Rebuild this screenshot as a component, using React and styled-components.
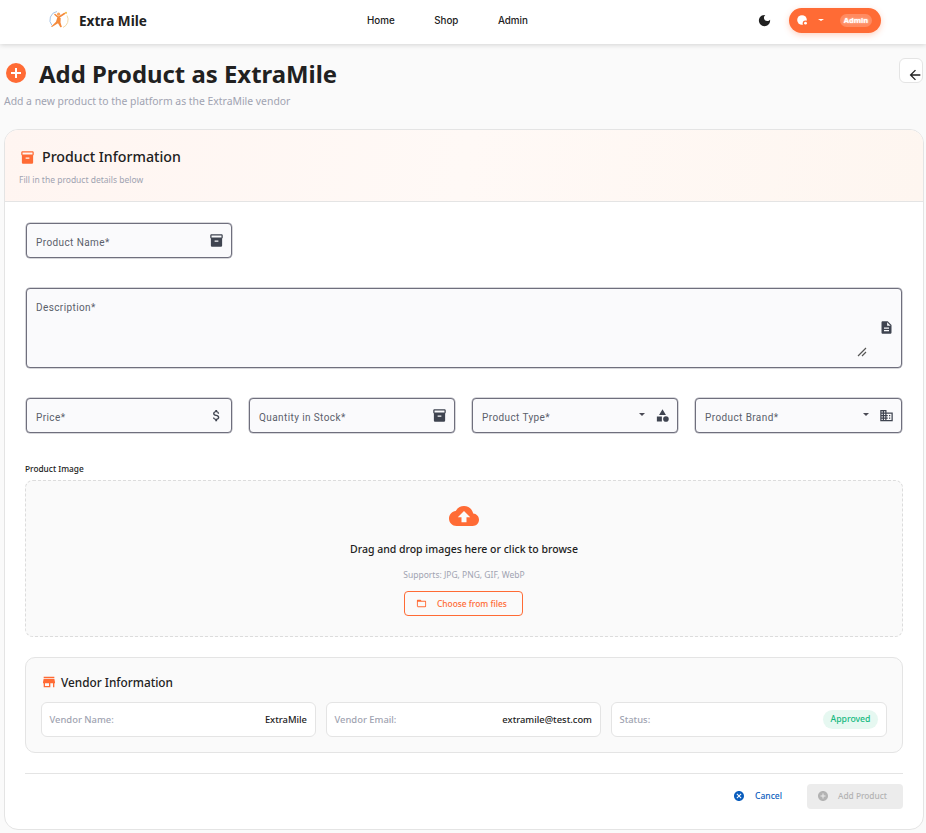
import React from 'react';
import styled, { createGlobalStyle } from 'styled-components';

const GlobalStyle = createGlobalStyle`
  html, body { margin: 0; padding: 0; background: #fafafa; overflow: hidden; }
  body { font-family: "Noto Sans", "Open Sans", sans-serif; color: #212121; }
  * { box-sizing: border-box; }
`;

const ORANGE = '#ff6b35';

// material style icon paths
const paths = {
  box: 'M20 2H4c-1 0-2 .9-2 2v3.01c0 .72.43 1.34 1 1.69V20c0 1.1 1.1 2 2 2h14c.9 0 2-.9 2-2V8.7c.57-.35 1-.97 1-1.69V4c0-1.1-1-2-2-2zm-5 12H9v-2h6v2zm5-7H4V4l16-.02V7z',
  doc: 'M14 2H6c-1.1 0-1.99.9-1.99 2L4 20c0 1.1.89 2 1.99 2H18c1.1 0 2-.9 2-2V8l-6-6zm2 16H8v-2h8v2zm0-4H8v-2h8v2zm-3-5V3.5L18.5 9H13z',
  money: 'M11.8 10.9c-2.27-.59-3-1.2-3-2.15 0-1.09 1.01-1.85 2.7-1.85 1.78 0 2.44.85 2.5 2.1h2.21c-.07-1.72-1.12-3.3-3.21-3.81V3h-3v2.16c-1.94.42-3.5 1.68-3.5 3.61 0 2.31 1.91 3.46 4.7 4.13 2.5.6 3 1.48 3 2.41 0 .69-.49 1.79-2.7 1.79-2.06 0-2.87-.92-2.98-2.1h-2.2c.12 2.19 1.76 3.42 3.68 3.83V21h3v-2.15c1.95-.37 3.5-1.5 3.5-3.55 0-2.84-2.43-3.81-4.7-4.4z',
  category: 'M12 2l-5.5 9h11zM3 13.5h8v8H3zM17.5 13a4.5 4.5 0 1 0 0 9 4.5 4.5 0 0 0 0-9z',
  domain: 'M12 7V3H2v18h20V7H12zM6 19H4v-2h2v2zm0-4H4v-2h2v2zm0-4H4V9h2v2zm0-4H4V5h2v2zm4 12H8v-2h2v2zm0-4H8v-2h2v2zm0-4H8V9h2v2zm0-4H8V5h2v2zm10 12h-8v-2h2v-2h-2v-2h2v-2h-2V9h8v10zm-2-8h-2v2h2v-2zm0 4h-2v2h2v-2z',
  cloud: 'M19.35 10.04C18.67 6.59 15.64 4 12 4 9.11 4 6.6 5.64 5.35 8.04 2.34 8.36 0 10.91 0 14c0 3.31 2.69 6 6 6h13c2.76 0 5-2.24 5-5 0-2.64-2.05-4.78-4.65-4.96zM14 13v4h-4v-4H7l5-5 5 5h-3z',
  folder: 'M20 6h-8l-2-2H4c-1.1 0-1.99.9-1.99 2L2 18c0 1.1.9 2 2 2h16c1.1 0 2-.9 2-2V8c0-1.1-.9-2-2-2zm0 12H4V8h16v10z',
  store: 'M20 4H4v2h16V4zm1 10v-2l-1-5H4l-1 5v2h1v6h10v-6h4v6h2v-6h1zm-9 4H6v-4h6v4z',
  cancel: 'M12 2C6.47 2 2 6.47 2 12s4.47 10 10 10 10-4.47 10-10S17.53 2 12 2zm5 13.59L15.59 17 12 13.41 8.41 17 7 15.59 10.59 12 7 8.41 8.41 7 12 10.59 15.59 7 17 8.41 13.41 12 17 15.59z',
  add: 'M12 2C6.48 2 2 6.48 2 12s4.48 10 10 10 10-4.48 10-10S17.52 2 12 2zm5 11h-4v4h-2v-4H7v-2h4V7h2v4h4v2z',
  moon: 'M12 3c-4.97 0-9 4.03-9 9s4.03 9 9 9 9-4.03 9-9c0-.46-.04-.92-.1-1.36-.98 1.37-2.58 2.26-4.4 2.26-2.98 0-5.4-2.42-5.4-5.4 0-1.81.89-3.42 2.26-4.4-.44-.06-.9-.1-1.36-.1z',
  back: 'M20 11H7.83l5.59-5.59L12 4l-8 8 8 8 1.41-1.41L7.83 13H20v-2z',
};

const Icon = ({ name, size = 16, color = 'currentColor' }) => (
  <svg width={size} height={size} viewBox="0 0 24 24" fill={color} style={{ flex: 'none', display: 'block' }}>
    <path d={paths[name]} />
  </svg>
);

const Navbar = styled.nav`
  height: 44px;
  background: #fff;
  box-shadow: 0 1px 5px rgba(0, 0, 0, 0.16);
  display: flex;
  align-items: center;
  position: relative;
  padding: 0 0 4px 49px;
`;

const Brand = styled.div`
  display: flex;
  align-items: center;
  gap: 10px;
  width: 318px;
  font-size: 13.6px;
  font-weight: 700;
`;

const NavLinks = styled.div`
  display: flex;
  gap: 39.5px;
  width: 390px;
`;

const NavLink = styled.span`
  font-size: 9.8px;
  font-weight: 500;
  font-family: Inter, sans-serif;
`;

const MoonButton = styled.div`
  width: 15px;
  color: #212121;
`;

const UserPill = styled.div`
  width: 92px;
  height: 25px;
  margin-left: 17px;
  border-radius: 13px;
  background: ${ORANGE};
  box-shadow: 0 2px 6px rgba(255, 107, 53, 0.3);
  display: flex;
  align-items: center;
  color: #fff;
  padding-left: 8px;
`;

const Caret = styled.span`
  width: 0;
  height: 0;
  border-left: 3px solid transparent;
  border-right: 3px solid transparent;
  border-top: 2px solid currentColor;
`;

const PillCaret = styled(Caret)`
  margin-left: 10px;
`;

const RoleBadge = styled.span`
  margin-left: 16px;
  height: 13px;
  width: 32px;
  text-align: center;
  border-radius: 7px;
  background: rgba(255, 255, 255, 0.22);
  font-size: 7.5px;
  font-weight: 700;
  line-height: 13px;
  text-shadow: 0 0 2px rgba(255, 255, 255, 0.9);
`;

const Page = styled.main`
  padding: 13px 2px 0 4px;
  height: 789px;
  position: relative;
`;

const TitleRow = styled.div`
  display: flex;
  align-items: center;
  gap: 13px;
  height: 33px;
  padding-left: 2px;
`;

const PlusCircle = styled.span`
  width: 20px;
  height: 20px;
  margin-top: -1px;
  border-radius: 50%;
  background: ${ORANGE};
  position: relative;
  &::before, &::after {
    content: '';
    position: absolute;
    background: #fff;
    left: 5px;
    top: 9px;
    width: 10px;
    height: 2px;
  }
  &::after {
    transform: rotate(90deg);
  }
`;

const Title = styled.h1`
  margin: 0;
  font-size: 23.9px;
  font-weight: 700;
`;

const Subtitle = styled.p`
  margin: 4px 0 0;
  height: 35px;
  font-size: 10.4px;
  line-height: 15px;
  color: #a0a3b1;
`;

const BackButton = styled.div`
  position: absolute;
  top: 14px;
  right: 3px;
  width: 24px;
  height: 25px;
  background: #fff;
  border: 1px solid #e4e4e4;
  border-radius: 6px;
  display: flex;
  align-items: flex-end;
  justify-content: center;
  padding-left: 7px;
  color: #212121;
`;

const BackIcon = styled.span`
  margin-bottom: -1px;
`;

const Card = styled.section`
  height: 701px;
  background: #fff;
  border: 1px solid #e4e4e4;
  border-radius: 14px;
  overflow: hidden;
`;

const CardHeader = styled.header`
  height: 72px;
  padding: 15px 15px 0;
  background: linear-gradient(100deg, #fff5f1, #fff9f6 50%, #fef6f0);
  border-bottom: 1px solid #e4e4e4;
`;

const CardTitle = styled.h2`
  margin: 0;
  display: flex;
  align-items: center;
  gap: 7px;
  font-size: 14.2px;
  font-weight: 500;
  line-height: 24px;
`;

const CardHint = styled.p`
  margin: 5px 0 0 -1px;
  font-size: 8.5px;
  line-height: 12px;
  color: #a0a3b1;
`;

const Form = styled.div`
  padding: 21px 21px 0 21px;
`;

const FieldGrid = styled.div`
  display: grid;
  grid-template-columns: 206px 206px 206px 1fr;
  column-gap: 17px;
  margin-bottom: 30px;
`;

const Field = styled.div`
  grid-column: ${({ $wide }) => ($wide ? '1 / -1' : 'auto')};
  height: ${({ $wide }) => ($wide ? '80px' : '35px')};
  background: #fafafc;
  border: 1px solid #6f6f7d;
  box-shadow: 0 0 0 0.5px rgba(111, 111, 125, 0.55);
  border-radius: 4px;
  display: flex;
  align-items: center;
  position: relative;
  padding: 0 7px 0 9px;
  color: #3f4450;
`;

const FieldLabel = styled.span`
  position: ${({ $top }) => ($top ? 'absolute' : 'static')};
  top: 10px;
  left: 9px;
  flex: 1;
  font-family: Roboto, sans-serif;
  font-size: 10px;
  letter-spacing: 0.4px;
  color: #5b5f6b;
  padding-top: 3px;
`;

const FieldIcon = styled.span`
  margin-left: ${({ $afterCaret }) => ($afterCaret ? '0' : 'auto')};
  margin-top: -1px;
  color: #3f4450;
`;

const SelectCaret = styled(Caret)`
  margin-right: 10px;
  margin-top: -2px;
  border-left-width: 3.5px;
  border-right-width: 3.5px;
  border-top-width: 3.5px;
  color: #4a4a55;
`;

const Resizer = styled.svg`
  position: absolute;
  right: 34px;
  bottom: 10px;
`;

const SectionLabel = styled.div`
  margin: -1px 0 5px -1px;
  font-size: 8.3px;
  line-height: 13px;
  font-weight: 500;
  color: #212121;
`;

const DropZone = styled.div`
  height: 157px;
  margin: 0 -1px;
  background: #fafafa;
  border: 1px dashed #dcdcdc;
  border-radius: 8px;
  display: flex;
  flex-direction: column;
  align-items: center;
  padding-top: 20px;
`;

const DropText = styled.p`
  margin: 10px 0 0;
  font-size: 10.5px;
  font-weight: 500;
  line-height: 16px;
`;

const DropHint = styled.p`
  margin: 12px 0 0;
  font-size: 8.5px;
  line-height: 12px;
  color: #a0a3b1;
`;

const FileButton = styled.div`
  margin: 10px 1px 0 0;
  width: 119px;
  height: 25px;
  border: 1px solid ${ORANGE};
  border-radius: 4px;
  display: flex;
  align-items: center;
  padding-left: 11px;
  gap: 10px;
  font-size: 8.4px;
  font-weight: 500;
  color: ${ORANGE};
`;

const VendorBox = styled.div`
  margin: 20px -1px 0;
  height: 96px;
  background: #fafafa;
  border: 1px solid #e4e4e4;
  border-radius: 10px;
  padding: 14px 15px 0;
`;

const VendorTitle = styled.h3`
  margin: 0 0 10px;
  display: flex;
  align-items: center;
  gap: 4px;
  font-size: 11.8px;
  font-weight: 500;
  line-height: 20px;
`;

const VendorGrid = styled.div`
  display: grid;
  grid-template-columns: 275px 275px 1fr;
  gap: 10px;
`;

const VendorCell = styled.div`
  height: 35px;
  background: #fff;
  border: 1px solid #e4e4e4;
  border-radius: 6px;
  display: flex;
  align-items: center;
  justify-content: space-between;
  padding: 0 8px 0 7.5px;
  font-size: 9.4px;
`;

const VendorKey = styled.span`
  color: #a0a3b1;
  font-weight: 500;
`;

const VendorValue = styled.span`
  color: #212121;
  font-weight: 500;
`;

const StatusBadge = styled.span`
  height: 19px;
  padding: 0 7.5px;
  border-radius: 10px;
  background: #e6f8f1;
  color: #14b87f;
  font-size: 8.7px;
  font-weight: 500;
  line-height: 19px;
`;

const Actions = styled.div`
  margin: 20px -1px 0;
  padding-top: 10px;
  border-top: 1px solid #e4e4e4;
  display: flex;
  justify-content: flex-end;
  align-items: center;
`;

const CancelButton = styled.div`
  display: flex;
  align-items: center;
  gap: 10px;
  font-size: 8.5px;
  font-weight: 500;
  color: #0a5dbd;
  margin: 0 25px 2px 0;
`;

const SubmitButton = styled.div`
  width: 96px;
  height: 25px;
  background: #ececec;
  border-radius: 4px;
  color: #b3b3b3;
  display: flex;
  align-items: center;
  gap: 9px;
  padding: 0 0 2px 10px;
  font-size: 8.3px;
  font-weight: 500;
`;

const Logo = () => (
  <svg width="20" height="20" viewBox="0 0 20 20" fill="none">
    <path d="M8 1.5a8.5 8.5 0 0 0-5 14" stroke="#a9c4e4" strokeWidth="1" />
    <path d="M14 17.5a8.5 8.5 0 0 0 4-12" stroke="#f1d9a8" strokeWidth="1" />
    <circle cx="17" cy="2.8" r="1.1" fill="#f3c04f" />
    <circle cx="9.6" cy="4.2" r="1.6" fill="#f7a35c" />
    <path d="M6 4.5l3.5 3 6-4M10 7.5v4" stroke="#f58a3c" strokeWidth="1.6" strokeLinecap="round" />
    <path d="M8.3 7.5l3.4.4-.2 4.6 1.4 4.5-1.6.3-2.3-4-6 3.8-1-.3 5-5z" fill="#f58a3c" />
  </svg>
);

const UserAvatar = () => (
  <svg width="11" height="11" viewBox="0 0 11 11" style={{ flex: 'none', display: 'block' }}>
    <circle cx="5" cy="5" r="4.8" fill="#fff" />
    <circle cx="8.5" cy="8.2" r="2.8" fill={ORANGE} />
    <circle cx="8.5" cy="8.2" r="1.4" fill="#fff" />
  </svg>
);

const fieldRow = [
  { label: 'Price*', icon: 'money' },
  { label: 'Quantity in Stock*', icon: 'box' },
  { label: 'Product Type*', icon: 'category', select: true },
  { label: 'Product Brand*', icon: 'domain', select: true },
];

const App = () => (
  <>
    <GlobalStyle />
    <Navbar>
      <Brand>
        <Logo />
        Extra Mile
      </Brand>
      <NavLinks>
        <NavLink>Home</NavLink>
        <NavLink>Shop</NavLink>
        <NavLink>Admin</NavLink>
      </NavLinks>
      <MoonButton>
        <Icon name="moon" size={15} />
      </MoonButton>
      <UserPill>
        <UserAvatar />
        <PillCaret />
        <RoleBadge>Admin</RoleBadge>
      </UserPill>
    </Navbar>
    <Page>
      <TitleRow>
        <PlusCircle />
        <Title>Add Product as ExtraMile</Title>
      </TitleRow>
      <Subtitle>Add a new product to the platform as the ExtraMile vendor</Subtitle>
      <BackButton>
        <BackIcon>
          <Icon name="back" size={16} />
        </BackIcon>
      </BackButton>
      <Card>
        <CardHeader>
          <CardTitle>
            <Icon name="box" size={15} color={ORANGE} />
            Product Information
          </CardTitle>
          <CardHint>Fill in the product details below</CardHint>
        </CardHeader>
        <Form>
          <FieldGrid>
            <Field>
              <FieldLabel>Product Name*</FieldLabel>
              <FieldIcon>
                <Icon name="box" size={15} />
              </FieldIcon>
            </Field>
          </FieldGrid>
          <FieldGrid>
            <Field $wide>
              <FieldLabel $top>Description*</FieldLabel>
              <FieldIcon>
                <Icon name="doc" size={15} />
              </FieldIcon>
              <Resizer width="10" height="10" viewBox="0 0 10 10" stroke="#555" strokeWidth="1.2">
                <path d="M1 9l8-8M5 9l4-4" />
              </Resizer>
            </Field>
          </FieldGrid>
          <FieldGrid>
            {fieldRow.map((f) => (
              <Field key={f.label}>
                <FieldLabel>{f.label}</FieldLabel>
                {f.select && <SelectCaret />}
                <FieldIcon $afterCaret={f.select}>
                  <Icon name={f.icon} size={15} />
                </FieldIcon>
              </Field>
            ))}
          </FieldGrid>
          <SectionLabel>Product Image</SectionLabel>
          <DropZone>
            <Icon name="cloud" size={30} color={ORANGE} />
            <DropText>Drag and drop images here or click to browse</DropText>
            <DropHint>Supports: JPG, PNG, GIF, WebP</DropHint>
            <FileButton>
              <Icon name="folder" size={11} />
              Choose from files
            </FileButton>
          </DropZone>
          <VendorBox>
            <VendorTitle>
              <Icon name="store" size={16} color={ORANGE} />
              Vendor Information
            </VendorTitle>
            <VendorGrid>
              <VendorCell>
                <VendorKey>Vendor Name:</VendorKey>
                <VendorValue>ExtraMile</VendorValue>
              </VendorCell>
              <VendorCell>
                <VendorKey>Vendor Email:</VendorKey>
                <VendorValue>extramile@test.com</VendorValue>
              </VendorCell>
              <VendorCell>
                <VendorKey>Status:</VendorKey>
                <StatusBadge>Approved</StatusBadge>
              </VendorCell>
            </VendorGrid>
          </VendorBox>
          <Actions>
            <CancelButton>
              <Icon name="cancel" size={12} />
              Cancel
            </CancelButton>
            <SubmitButton>
              <Icon name="add" size={12} />
              Add Product
            </SubmitButton>
          </Actions>
        </Form>
      </Card>
    </Page>
  </>
);

export default App;
